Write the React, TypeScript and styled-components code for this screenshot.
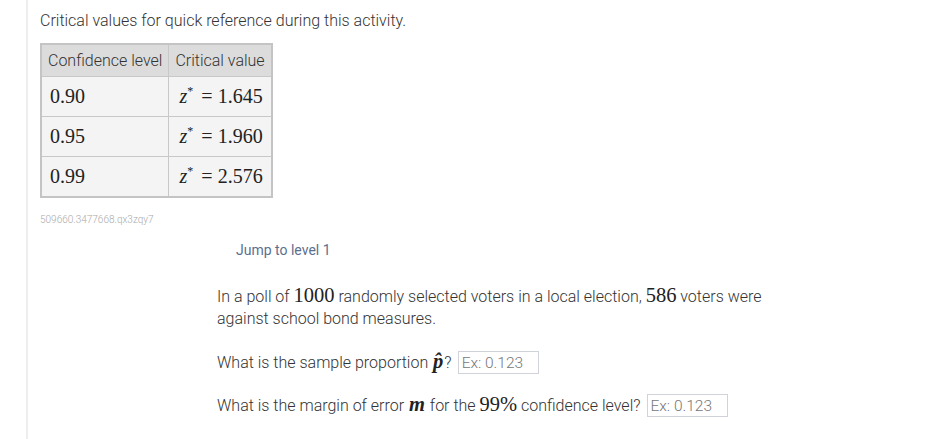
import React from 'react';
import styled, { createGlobalStyle } from 'styled-components';

const GlobalStyle = createGlobalStyle`
    body {
        margin: 0;
        background: #fff;
        font-family: Roboto, "Liberation Sans", sans-serif;
        color: #3a3a3a;
    }
`;

const StyledPage = styled.div`
    margin-left: 26px;
    border-left: 2px solid #eeeeee;
    padding: 11px 0 20px 12px;
    min-height: 420px;
`;

const StyledIntro = styled.p`
    margin: 0 0 12px;
    font-size: 16px;
    font-weight: 300;
    line-height: 20px;
    color: #333;
`;

const StyledTable = styled.table`
    border-collapse: collapse;
    border: 2px solid #c4c4c4;
`;

const StyledHeadCell = styled.th`
    background: #dcdcdc;
    border: 1px solid #c8c8c8;
    padding: 0 6px;
    height: 31px;
    font-size: 16px;
    font-weight: 300;
    line-height: 20px;
    text-align: left;
    color: #333;
`;

const StyledCell = styled.td<{ $align?: 'left' | 'right' }>`
    background: #f4f4f4;
    border: 1px solid #c8c8c8;
    padding: 0 8px;
    height: 39px;
    line-height: 20px;
    text-align: ${(p) => p.$align || 'left'};
`;

const Math = styled.span`
    font-family: "Liberation Serif", "DejaVu Serif", serif;
    font-size: 20px;
    line-height: 1;
    color: #222;
`;

const MathVar = styled.i`
    font-family: "Liberation Serif", "DejaVu Serif", serif;
    font-style: italic;
    margin-right: 8px;
`;

const Star = styled.sup`
    font-size: 12px;
    font-style: normal;
    line-height: 0;
`;

const StyledId = styled.div`
    margin-top: 16px;
    font-size: 10px;
    color: #aaa;
    font-weight: 300;
`;

const StyledActivity = styled.section`
    margin-left: 177px;
    margin-top: 15px;
    display: flex;
    flex-direction: column;
`;

const StyledJump = styled.a`
    margin-left: 19px;
    font-size: 14px;
    color: #5b6f8f;
    line-height: 20px;
`;

const StyledText = styled.p`
    margin: 26px 0 0;
    width: 560px;
    font-size: 16px;
    font-weight: 300;
    line-height: 22px;
    color: #333;
`;

const StyledQuestion = styled.div<{ $gap: number }>`
    display: flex;
    align-items: center;
    gap: 6px;
    margin-top: ${(p) => p.$gap}px;
    font-size: 16px;
    font-weight: 300;
    line-height: 23px;
    color: #333;
`;

const StyledInput = styled.input`
    box-sizing: border-box;
    width: 81px;
    height: 23px;
    padding: 0 3px;
    border: 1px solid #d0d4da;
    font-family: Roboto, sans-serif;
    font-size: 15.5px;
    font-weight: 300;
    color: #333;
    &::placeholder {
        color: #777;
    }
`;

const InlineMath = styled.span`
    font-family: "Liberation Serif", "DejaVu Serif", serif;
    font-size: 20.5px;
    line-height: 0;
    color: #222;
`;

const MathLetter = styled.i<{ $bold?: boolean }>`
    font-weight: ${(p) => (p.$bold ? 700 : 400)};
    padding: 0 1px;
`;

const rows = [
    { level: '0.90', value: '1.645' },
    { level: '0.95', value: '1.960' },
    { level: '0.99', value: '2.576' },
];

export default function App() {
    return (
        <>
            <GlobalStyle />
            <StyledPage>
                <StyledIntro>Critical values for quick reference during this activity.</StyledIntro>
                <StyledTable>
                    <thead>
                        <tr>
                            <StyledHeadCell>Confidence level</StyledHeadCell>
                            <StyledHeadCell>Critical value</StyledHeadCell>
                        </tr>
                    </thead>
                    <tbody>
                        {rows.map((row) => (
                            <tr key={row.level}>
                                <StyledCell><Math>{row.level}</Math></StyledCell>
                                <StyledCell $align='right'>
                                    <Math><MathVar>z<Star>*</Star></MathVar>= {row.value}</Math>
                                </StyledCell>
                            </tr>
                        ))}
                    </tbody>
                </StyledTable>
                <StyledId>509660.3477668.qx3zqy7</StyledId>
                <StyledActivity>
                    <StyledJump>Jump to level 1</StyledJump>
                    <StyledText>
                        In a poll of <InlineMath>1000</InlineMath> randomly selected voters in a local election, <InlineMath>586</InlineMath> voters were against school bond measures.
                    </StyledText>
                    <StyledQuestion $gap={21}>
                        <span>What is the sample proportion <InlineMath><MathLetter $bold>p̂</MathLetter></InlineMath>?</span>
                        <StyledInput placeholder='Ex: 0.123' />
                    </StyledQuestion>
                    <StyledQuestion $gap={20}>
                        <span>What is the margin of error <InlineMath><MathLetter $bold>m</MathLetter></InlineMath> for the <InlineMath>99%</InlineMath> confidence level?</span>
                        <StyledInput placeholder='Ex: 0.123' />
                    </StyledQuestion>
                </StyledActivity>
            </StyledPage>
        </>
    );
}
